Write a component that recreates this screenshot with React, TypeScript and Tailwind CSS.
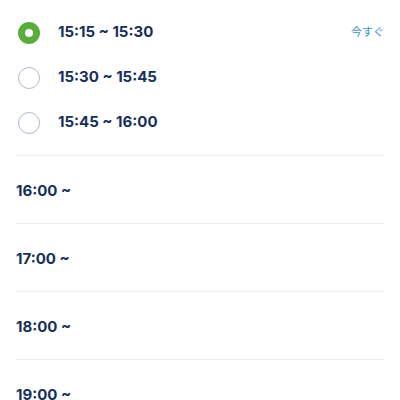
const slots = [
  { label: '15:15 ~ 15:30', selected: true, now: true },
  { label: '15:30 ~ 15:45', selected: false, now: false },
  { label: '15:45 ~ 16:00', selected: false, now: false },
]

const hours = ['16:00 ~', '17:00 ~', '18:00 ~', '19:00 ~']

function Radio({ selected }: { selected: boolean }) {
  if (selected) {
    return (
      <span className="flex h-[22px] w-[22px] items-center justify-center rounded-full bg-[#5aad3c]">
        <span className="h-[8px] w-[8px] rounded-full bg-white" />
      </span>
    )
  }
  return <span className="h-[22px] w-[22px] rounded-full border border-[#a9bccf] bg-white" />
}

export default function App() {
  return (
    <div
      className="h-[400px] w-[400px] overflow-hidden bg-white text-[#17305a]"
      style={{ fontFamily: 'Inter, "Noto Sans CJK JP", sans-serif' }}
    >
      <div className="flex flex-col pt-[10px]">
        {slots.map((slot) => (
          <div key={slot.label} className="flex h-[45px] items-center pr-[16px] pl-[18px]">
            <Radio selected={slot.selected} />
            <span className="ml-[18px] text-[15px] font-bold">{slot.label}</span>
            {slot.now && (
              <span className="ml-auto text-[11px] text-[#3b8ed6]">今すぐ</span>
            )}
          </div>
        ))}
      </div>
      <div className="mx-[16px] mt-[10px]">
        {hours.map((h) => (
          <div key={h} className="flex h-[68px] items-center border-t border-[#eceef1] pt-[4px]">
            <span className="text-[15px] font-bold">{h}</span>
          </div>
        ))}
      </div>
    </div>
  )
}
